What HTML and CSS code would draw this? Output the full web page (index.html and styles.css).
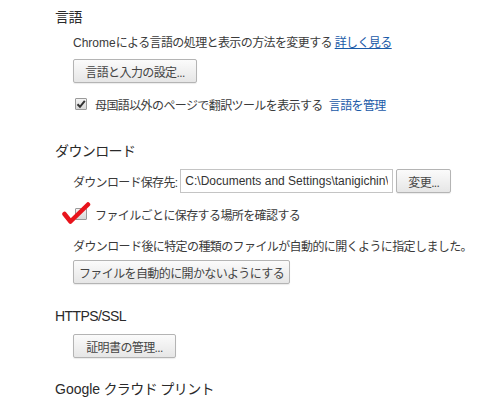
FILE: index.html
```html
<!DOCTYPE html>
<html lang="ja">
<head>
  <meta charset="UTF-8">
  <title>設定</title>
  <link rel="stylesheet" href="styles.css">
</head>
<body>
  <!-- 言語 -->
  <section class="section first">
    <h3>言語</h3>
    <div class="body">
      <p class="line l-intro"><span class="latin">Chrome</span>による言語の処理と表示の方法を変更する <a href="#" class="link under">詳しく見る</a></p>
      <button class="btn b-lang">言語と入力の設定...</button>
      <label class="check-row c-translate">
        <span class="box checked">
          <svg width="10" height="10" viewBox="0 0 10 10"><path d="M1.5 5.2 L4 7.8 L8.8 1.8" fill="none" stroke="#333" stroke-width="2"/></svg>
        </span>
        <span>母国語以外のページで翻訳ツールを表示する</span>
        <a href="#" class="link">言語を管理</a>
      </label>
    </div>
  </section>

  <!-- ダウンロード -->
  <section class="section s-download">
    <h3>ダウンロード</h3>
    <div class="body">
      <div class="path-row">
        <span class="label">ダウンロード保存先:</span>
        <input class="path" type="text" value="C:\Documents and Settings\tanigichin\My Documents\Downloads" readonly>
        <button class="btn b-change">変更...</button>
      </div>
      <label class="check-row c-ask">
        <span class="box"></span>
        <span>ファイルごとに保存する場所を確認する</span>
        <svg class="red-check" width="30" height="22" viewBox="0 0 30 22">
          <path d="M2.5 12 L8.5 19.5 L26 2.5" fill="none" stroke="#e8141c" stroke-width="4.5" stroke-linecap="round" stroke-linejoin="round"/>
        </svg>
      </label>
      <p class="line l-auto">ダウンロード後に特定の種類のファイルが自動的に開くように指定しました。</p>
      <button class="btn b-auto">ファイルを自動的に開かないようにする</button>
    </div>
  </section>

  <!-- HTTPS/SSL -->
  <section class="section s-ssl">
    <h3 class="latin">HTTPS/SSL</h3>
    <div class="body">
      <button class="btn b-cert">証明書の管理...</button>
    </div>
  </section>

  <!-- クラウド プリント -->
  <section class="section s-print">
    <h3><span class="latin">Google</span> クラウド プリント</h3>
  </section>
</body>
</html>
```

FILE: styles.css
```css
body { margin: 0; background: #fff; color: #3a3a3a; font-family: "Liberation Sans", "Noto Sans CJK JP", sans-serif; font-size: 12px; }
.section { padding-left: 55px; }
.section h3 { margin: 0; font-size: 14px; font-weight: normal; line-height: 20px; height: 20px; color: #2a2a2a; letter-spacing: -0.6px; }
.latin { letter-spacing: 0; }
.body { padding-left: 18px; }

.first { padding-top: 7px; }
.s-download { margin-top: 27px; }
.s-ssl { margin-top: 22px; }
.s-print { margin-top: 21px; }

.line { margin: 0; line-height: 20px; height: 20px; white-space: nowrap; letter-spacing: -0.6px; }
.l-intro { margin-top: 6px; }
.l-auto { margin-top: 13px; }

.link { color: #1a5aa8; text-decoration: none; margin-left: 6px; }
.link.under { text-decoration: underline; margin-left: 0; }

.btn { display: block; height: 24px; padding: 0 11px; border: 1px solid #b4b4b4; border-radius: 2px; background: linear-gradient(#fbfbfb, #e6e6e6); color: #444; font: inherit; letter-spacing: -0.6px; white-space: nowrap; box-shadow: 0 1px 1px rgba(0,0,0,0.08); }
.b-lang { margin-top: 6px; width: 124px; }
.b-auto { margin-top: 3px; width: 217px; padding: 0; }
.b-cert { margin-top: 8px; width: 103px; }
.b-change { flex: none; width: 55px; margin-left: 3px; padding: 0; }

.check-row { position: relative; display: flex; align-items: center; height: 20px; white-space: nowrap; letter-spacing: -0.6px; }
.c-translate { margin-top: 11px; }
.c-ask { margin-top: 11px; }
.box { display: flex; align-items: center; justify-content: center; width: 10px; height: 10px; margin: 0 8px 0 2px; border: 1px solid #9a9a9a; border-radius: 1px; background: linear-gradient(#f4f4f4, #d8d8d8); }
.red-check { position: absolute; left: -11px; top: -2px; }

.path-row { display: flex; align-items: center; margin-top: 8px; height: 24px; }
.label { flex: none; letter-spacing: -0.7px; margin-right: 3px; white-space: nowrap; }
.path { flex: none; box-sizing: border-box; width: 213px; height: 24px; padding: 0 4px; border: 1px solid #c4c4c4; font: 12px "Liberation Sans", sans-serif; color: #333; }
```
